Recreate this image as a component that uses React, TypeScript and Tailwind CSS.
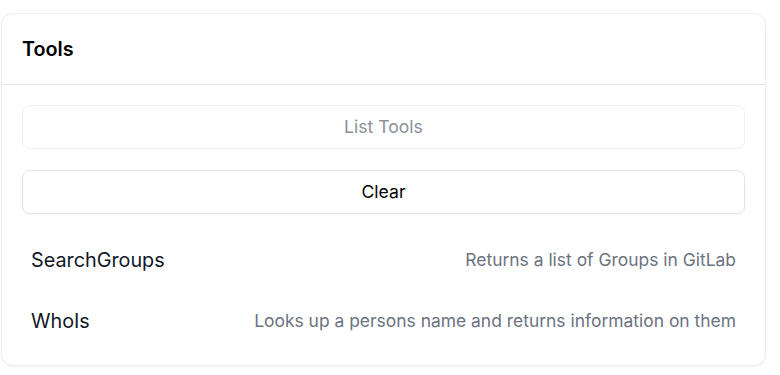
import React from 'react';

interface Tool {
  name: string;
  description: string;
}

const tools: Tool[] = [
  { name: 'SearchGroups', description: 'Returns a list of Groups in GitLab' },
  { name: 'WhoIs', description: 'Looks up a persons name and returns information on them' },
];

function ToolsPanel() {
  return (
    <div className="ml-px mt-[13px] w-[765px] rounded-xl border border-[#eeeff2] bg-white shadow-[0_1px_3px_rgba(0,0,0,0.06)]">
      {/* Header */}
      <div className="border-b border-[#e5e7eb] px-[20px] py-[20px]">
        <h2 className="text-[19.8px] leading-[30px] font-semibold text-black">Tools</h2>
      </div>

      {/* Body */}
      <div className="px-5 pt-5 pb-[13px]">
        <div className="flex flex-col gap-[21px]">
          <button
            disabled
            className="h-[44px] w-full rounded-lg border border-[#eef0f3] bg-white text-[17.6px] text-[#8b9099]"
          >
            List Tools
          </button>
          <button className="h-[44px] w-full rounded-lg border border-[#e1e5ee] bg-white text-[17.6px] text-black shadow-[0_1px_2px_rgba(0,0,0,0.05)]">
            Clear
          </button>
        </div>

        <ul className="mt-4">
          {tools.map((tool) => (
            <li key={tool.name} className="flex h-[61px] items-center justify-between pl-[9px] pr-[9px]">
              <span className="text-[19.8px] text-[#111827]">{tool.name}</span>
              <span className="text-[17.45px] text-[#6b7280]">{tool.description}</span>
            </li>
          ))}
        </ul>
      </div>
    </div>
  );
}

export default function App() {
  return (
    <div className="min-h-[375px] bg-white font-['Inter',sans-serif]">
      <ToolsPanel />
    </div>
  );
}
